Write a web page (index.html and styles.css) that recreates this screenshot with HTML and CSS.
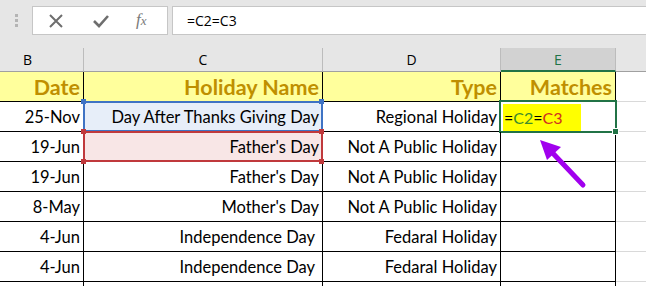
FILE: index.html
```html
<!DOCTYPE html>
<html lang="en">
<head>
    <meta charset="UTF-8">
    <title>Holiday Matches</title>
    <link rel="stylesheet" href="styles.css">
</head>
<body>
    <!-- Formula bar -->
    <div class="toolbar">
        <div class="grip"><span></span><span></span><span></span></div>
        <div class="fx-buttons">
            <svg class="icon" width="16" height="16" viewBox="0 0 16 16"><path d="M2 2 L14 14 M14 2 L2 14" stroke="#6e6e6e" stroke-width="2" fill="none"/></svg>
            <svg class="icon" width="18" height="16" viewBox="0 0 18 16"><path d="M2 8 L7 13 L16 3" stroke="#6e6e6e" stroke-width="2.6" fill="none"/></svg>
            <span class="fx">f<i>x</i></span>
        </div>
        <div class="formula">=C2=C3</div>
    </div>

    <!-- Sheet -->
    <div class="sheet">
        <div class="col-head first">B</div>
        <div class="col-head">C</div>
        <div class="col-head">D</div>
        <div class="col-head active">E</div>
        <div class="col-head blank"></div>

        <div class="cell title">Date</div>
        <div class="cell title">Holiday Name</div>
        <div class="cell title">Type</div>
        <div class="cell title">Matches</div>
        <div class="cell out"></div>

        <div class="cell">25-Nov</div>
        <div class="cell ref-blue">Day After Thanks Giving Day</div>
        <div class="cell">Regional Holiday</div>
        <div class="cell editing"><span class="entry">=<span class="c2">C2</span>=<span class="c3">C3</span></span></div>
        <div class="cell out"></div>

        <div class="cell">19-Jun</div>
        <div class="cell ref-red">Father's Day</div>
        <div class="cell">Not A Public Holiday</div>
        <div class="cell"></div>
        <div class="cell out"></div>

        <div class="cell">19-Jun</div>
        <div class="cell">Father's Day</div>
        <div class="cell">Not A Public Holiday</div>
        <div class="cell"></div>
        <div class="cell out"></div>

        <div class="cell">8-May</div>
        <div class="cell">Mother's Day</div>
        <div class="cell">Not A Public Holiday</div>
        <div class="cell"></div>
        <div class="cell out"></div>

        <div class="cell">4-Jun</div>
        <div class="cell pad">Independence Day</div>
        <div class="cell">Fedaral Holiday</div>
        <div class="cell"></div>
        <div class="cell out"></div>

        <div class="cell">4-Jun</div>
        <div class="cell pad">Independence Day</div>
        <div class="cell">Fedaral Holiday</div>
        <div class="cell"></div>
        <div class="cell out"></div>

        <div class="cell stub"></div>
        <div class="cell stub"></div>
        <div class="cell stub"></div>
        <div class="cell stub"></div>
        <div class="cell stub out"></div>

        <!-- pointer arrow -->
        <svg class="arrow" width="60" height="60" viewBox="0 0 60 60">
            <path d="M45 47 L8 8" stroke="#a100ee" stroke-width="5" stroke-linecap="round" fill="none"/>
            <path d="M2 2 L23 9 L9 22 Z" fill="#a100ee"/>
        </svg>
    </div>
</body>
</html>
```

FILE: styles.css
```css
body {
    margin: 0;
    width: 646px;
    height: 286px;
    overflow: hidden;
    background: #fff;
    font-family: Lato, "Open Sans", sans-serif;
}
.toolbar {
    height: 48px;
    background: #e6e6e6;
    display: flex;
    align-items: flex-start;
    padding-top: 6px;
    box-sizing: border-box;
}
.grip {
    width: 32px;
    display: flex;
    flex-direction: column;
    align-items: center;
    gap: 2px;
    padding-top: 8px;
}
.grip span {
    width: 3px;
    height: 3px;
    background: #b4b4b4;
}
.fx-buttons {
    width: 136px;
    height: 29px;
    box-sizing: border-box;
    background: #fff;
    border: 1px solid #c6c6c6;
    display: flex;
    align-items: center;
    padding-left: 15px;
}
.icon {
    display: block;
}
.fx-buttons .icon:first-child {
    margin-right: 28px;
}
.fx-buttons .icon:nth-child(2) {
    margin-right: 26px;
}
.fx {
    font-family: "Liberation Serif", serif;
    font-style: italic;
    font-size: 17px;
    color: #7a7a7a;
    margin-top: -2px;
}
.fx i {
    font-size: 13px;
}
.formula {
    flex: 1;
    margin-left: 4px;
    height: 29px;
    box-sizing: border-box;
    background: #fff;
    border: 1px solid #c6c6c6;
    border-right: none;
    padding-left: 14px;
    font-family: "Open Sans", sans-serif;
    font-size: 14px;
    line-height: 27px;
    color: #000;
}
.sheet {
    position: relative;
    display: grid;
    grid-template-columns: 84px 239px 178px 115px 1fr;
    grid-template-rows: 24px repeat(7, 30px) 4px;
}
.col-head {
    background: #e6e6e6;
    border-right: 1px solid #bcbcbc;
    border-bottom: 1px solid #a0a0a0;
    font-family: "Open Sans", sans-serif;
    font-size: 14px;
    line-height: 24px;
    text-align: center;
    color: #000;
}
.col-head.first {
    text-align: left;
    padding-left: 23px;
}
.col-head.active {
    background: #d2d2d2;
    border-bottom: 2px solid #217346;
    color: #217346;
    line-height: 23px;
}
.col-head.blank {
    border-right: none;
}
.cell {
    position: relative;
    border-right: 1px solid #000;
    border-bottom: 1px solid #000;
    display: flex;
    align-items: flex-end;
    justify-content: flex-end;
    padding: 0 3px 4px 0;
    font-size: 16.5px;
    color: #000;
    white-space: nowrap;
}
.cell.stub {
    padding: 0;
    border-bottom: none;
}
.cell.pad {
    padding-right: 7px;
}
.cell.out {
    border-right: none;
    border-bottom: 1px solid #d9d9d9;
}
.cell.stub.out {
    border-bottom: none;
}
.cell.title {
    background: #ffff9c;
    color: #bf8f00;
    font-weight: bold;
    font-size: 21.5px;
    padding-bottom: 1px;
}
.ref-blue {
    background: #e7eef9;
}
.ref-red {
    background: #f8e6e6;
}
.ref-blue::after, .ref-red::after {
    content: "";
    position: absolute;
    left: -1px;
    top: -1px;
    right: -1px;
    bottom: -1px;
    border: 2px solid #3f73c4;
}
.ref-red::after {
    border-color: #c0393c;
}
.ref-blue::before, .ref-red::before {
    content: "";
    position: absolute;
    left: -3px;
    top: -3px;
    width: 5px;
    height: 5px;
    background: #3f73c4;
    box-shadow: 238px 0 #3f73c4, 0 30px #3f73c4, 238px 30px #3f73c4;
    z-index: 1;
}
.ref-red::before {
    background: #c0393c;
    box-shadow: 238px 0 #c0393c, 0 30px #c0393c, 238px 30px #c0393c;
    z-index: 2;
}
.editing {
    justify-content: flex-start;
    padding: 0 0 0 2px;
    align-items: stretch;
}
.editing::after {
    content: "";
    position: absolute;
    left: -2px;
    top: -2px;
    right: -2px;
    bottom: -2px;
    border: 2px solid #217346;
}
.editing::before {
    content: "";
    position: absolute;
    right: -4px;
    bottom: -4px;
    width: 5px;
    height: 5px;
    background: #217346;
    border: 1px solid #fff;
    z-index: 2;
}
.entry {
    background: #ffff00;
    width: 77px;
    margin: 2px 0 0;
    padding: 0 0 4px 1px;
    display: flex;
    align-items: flex-end;
    font-size: 16px;
}
.c2 {
    color: #3d8c2c;
}
.c3 {
    color: #d03020;
}
.arrow {
    position: absolute;
    left: 538px;
    top: 90px;
}
```
